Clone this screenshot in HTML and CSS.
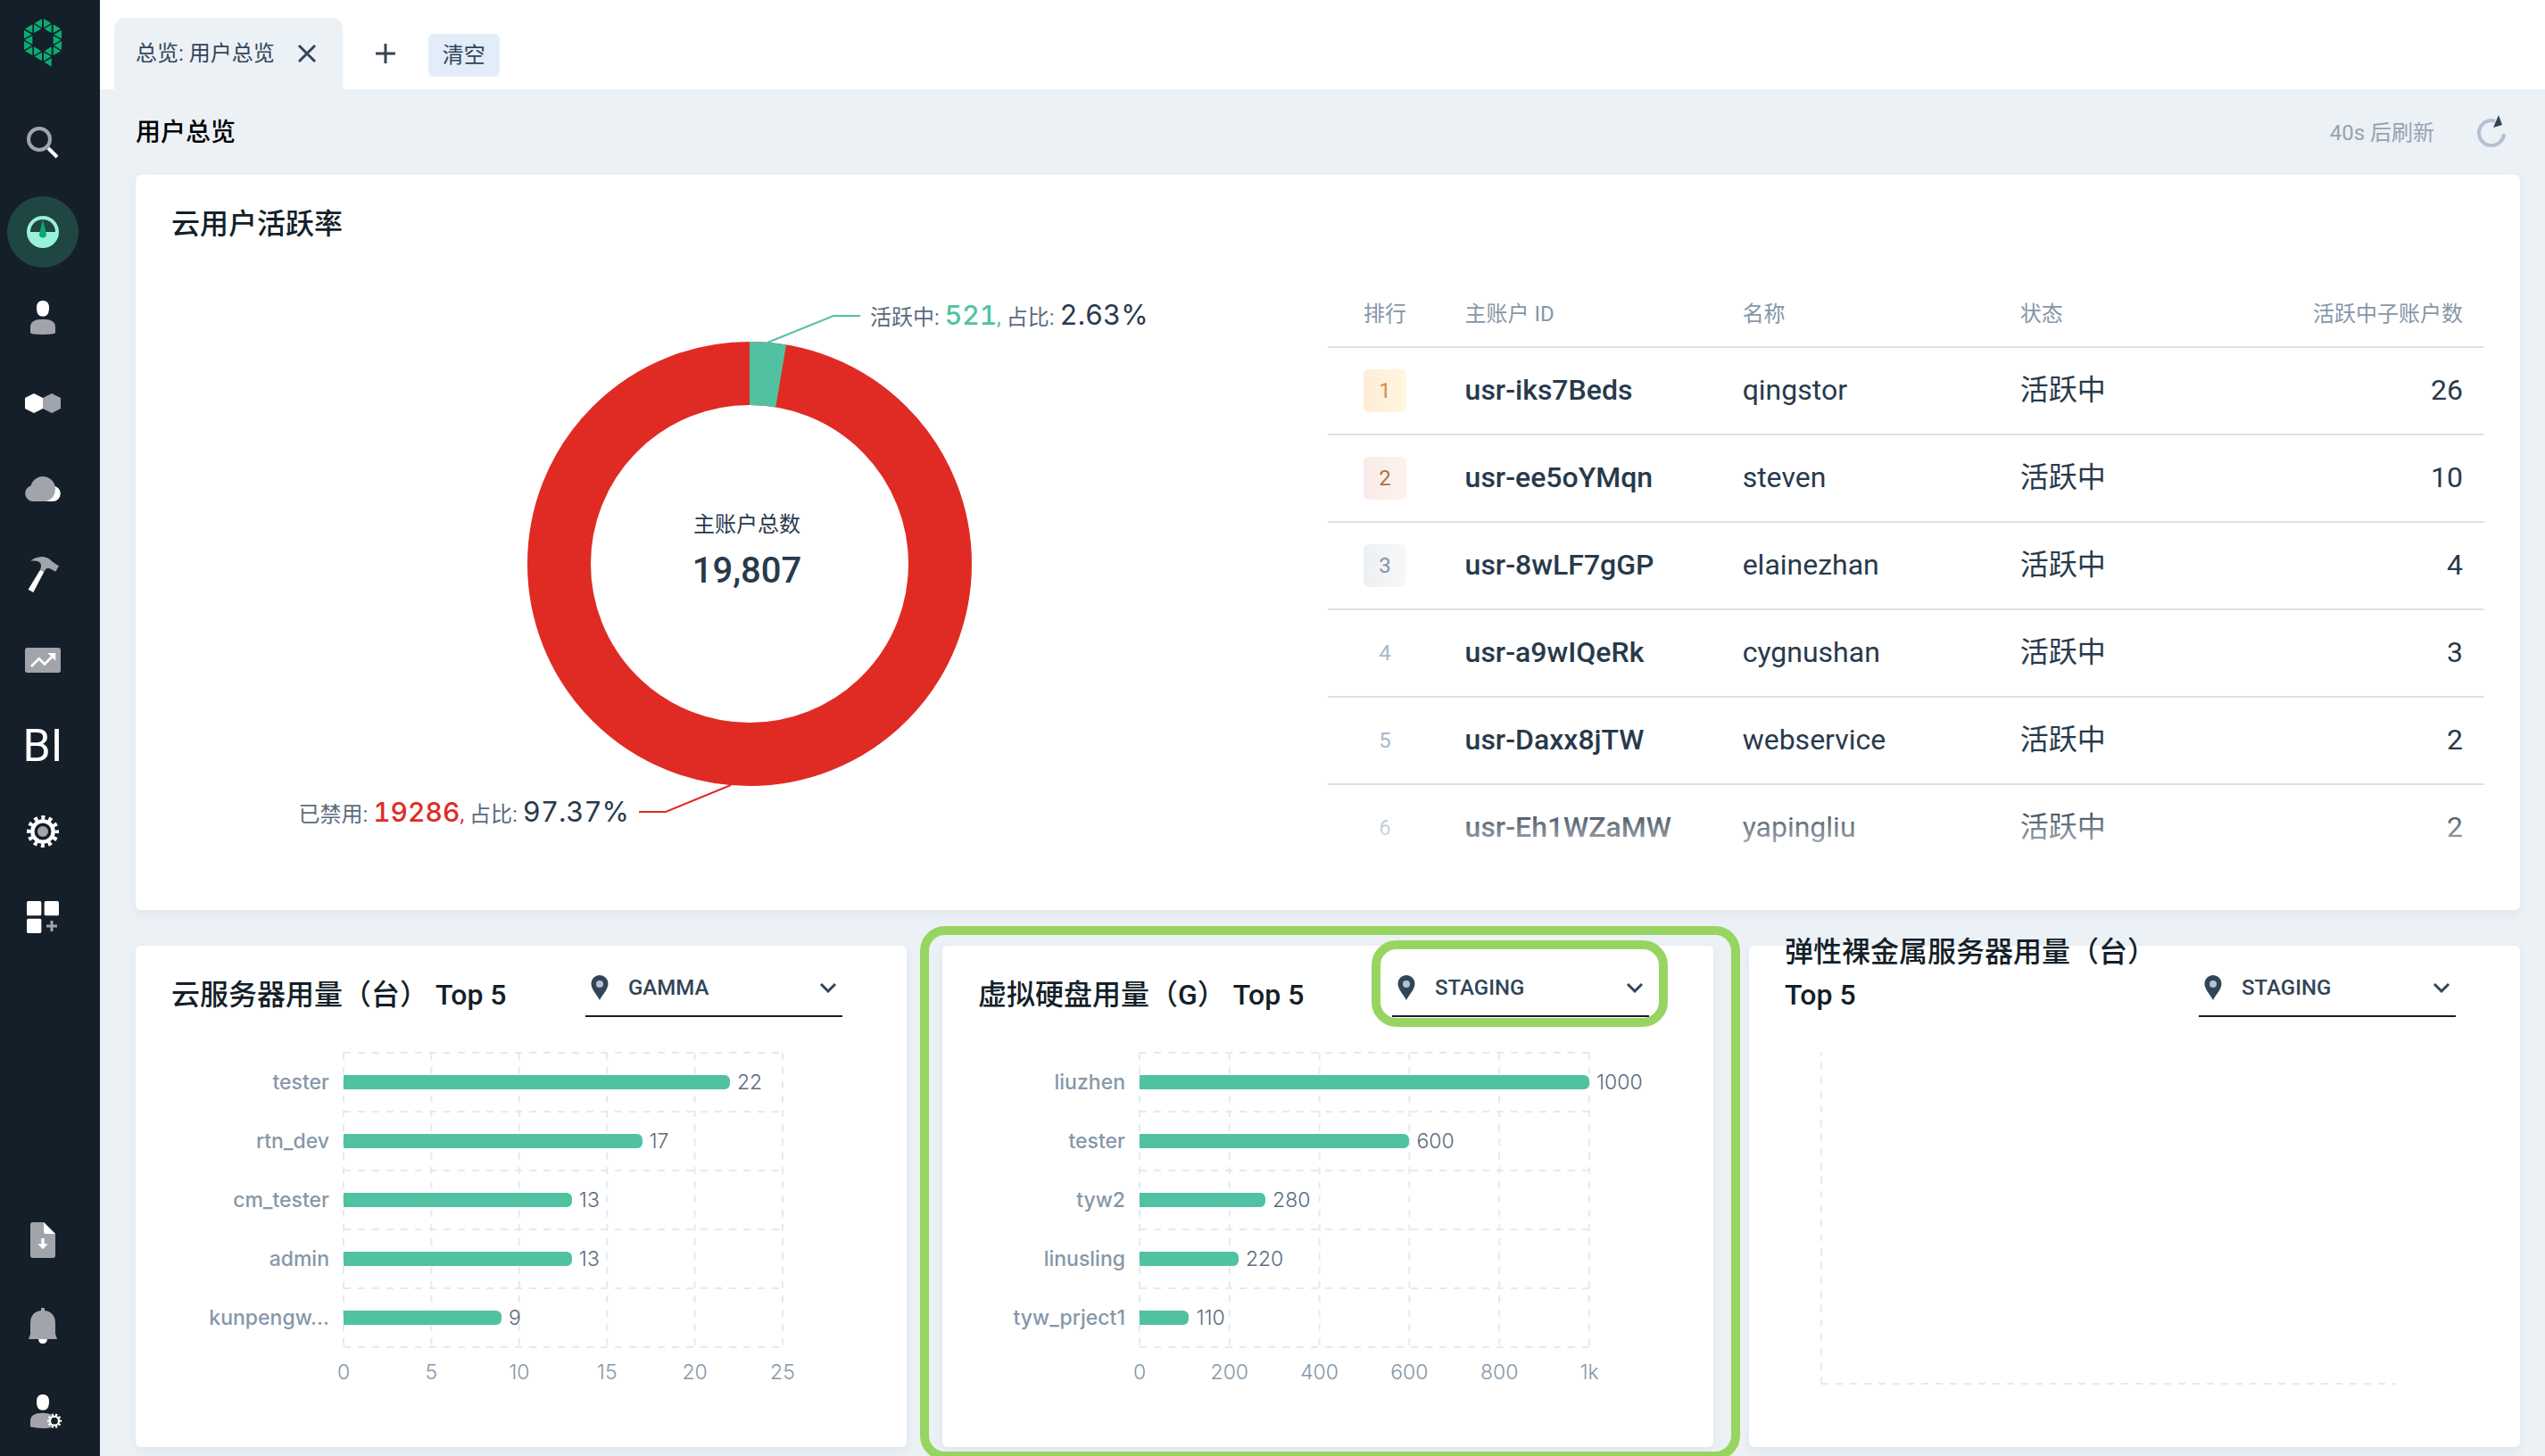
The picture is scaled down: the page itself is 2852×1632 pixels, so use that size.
FILE: index.html
```html
<!DOCTYPE html>
<html lang="zh-CN">
<head>
<meta charset="utf-8">
<title>用户总览</title>
<link rel="stylesheet" href="styles.css">
</head>
<body>
<div class="app">
  <nav class="sidebar">
    <a class="logo" href="#">
      <svg viewBox="0 0 288 288" fill="#0aac72">
        <path d="M141 63V93L116 78zM147 63V93L172 78zM109 82V111L84 97zM114 82V111L139 97zM173 82V111L149 97zM179 82V111L204 97zM81 101V130L107 116zM207 101V130L181 116zM109 120V149L83 134zM179 120V149L205 134zM81 138V168L107 153zM207 138V168L181 153zM109 157V186L84 172zM114 157V186L139 172zM173 157V186L149 172zM179 157V186L204 172zM141 176V205L116 190zM147 176V205L172 190zM173 195V224L149 209z"/>
      </svg>
    </a>
    <a class="nav-item" href="#">
      <svg viewBox="0 0 48 48"><circle cx="20" cy="16" r="12" fill="none" stroke="#a1a5ab" stroke-width="4"/><path d="M30 26L40 36" stroke="#fff" stroke-width="4"/></svg>
    </a>
    <a class="nav-item active" href="#">
      <span class="nav-disc"><svg viewBox="0 0 48 48"><circle cx="24" cy="24" r="18" fill="#9af1da"/><path d="M10 24A14 14 0 0 1 38 24z" fill="#1f4642"/><path d="M24 10L28 26.500A4 4 0 0 1 20 26.500z" fill="#0aa974"/></svg></span>
    </a>
    <a class="nav-item" href="#">
      <svg viewBox="72 714 144 144"><path d="M123 752C123 736 132 729 144 729S165 736 165 752C165 774 157 782 144 782S123 774 123 752z" fill="#fff"/><path d="M102 838V818Q102 791 144 791T186 818V838Q180 843 144 843T102 838z" fill="#a1a5ab"/></svg>
    </a>
    <a class="nav-item" href="#">
      <svg viewBox="0 0 48 48"><path d="M14 13L24 18V30L14 35L4 30V18z" fill="#fff"/><path d="M34 13L44 18V30L34 35L24 30V18z" fill="#a1a5ab"/></svg>
    </a>
    <a class="nav-item" href="#">
      <svg viewBox="0 0 48 48"><path d="M26 20.500H35A8.750 8.750 0 0 1 35 38H26z" fill="#fff"/><path d="M13 38A9 9 0 0 1 10.500 20.400A14 14 0 0 1 38 24Q38 34 28 38z" fill="#a1a5ab"/></svg>
    </a>
    <a class="nav-item" href="#">
      <svg viewBox="72 180 144 144"><path d="M135 236L148 243L112 312L95 302z" fill="#fff"/><path d="M103 206Q118 193 142 192Q162 193 174 207Q180 213 198 223L187 242Q174 235 165 231Q157 230 154 234L148 243L135 236Q141 222 135 213Q128 204 103 206z" fill="#a1a5ab"/></svg>
    </a>
    <a class="nav-item" href="#">
      <svg viewBox="72 468 144 144"><rect x="84" y="498" width="120" height="84" rx="8" fill="#a1a5ab"/><path d="M105 561L131 535L150 553L178 525" fill="none" stroke="#fff" stroke-width="8"/><path d="M160 516H187V542z" fill="#fff"/></svg>
    </a>
    <a class="nav-item nav-bi" href="#">BI</a>
    <a class="nav-item" href="#">
      <svg viewBox="-72 -72 144 144"><circle r="35" fill="none" stroke="#fff" stroke-width="13"/><circle r="47" fill="none" stroke="#fff" stroke-width="14" pathLength="120" stroke-dasharray="5 5" stroke-dashoffset="2.500"/><circle r="18" fill="#a1a5ab"/></svg>
    </a>
    <a class="nav-item" href="#">
      <svg viewBox="72 1332 144 144"><g fill="#fff"><rect x="90" y="1350" width="49" height="49" rx="5"/><rect x="149" y="1350" width="49" height="49" rx="5"/><rect x="90" y="1409" width="49" height="49" rx="5"/></g><path d="M156 1434H192M174 1416V1452" stroke="#a1a5ab" stroke-width="9"/></svg>
    </a>
    <div class="nav-foot">
      <a class="nav-item" href="#">
        <svg viewBox="72 138 144 144"><path d="M110 150H147L186 189V262Q186 270 178 270H110Q102 270 102 262V158Q102 150 110 150z" fill="#a1a5ab"/><path d="M147 150L186 189H157Q147 189 147 179z" fill="#fff"/><path d="M139 204H149V223H161L144 241L127 223H139z" fill="#fff"/></svg>
      </a>
      <a class="nav-item" href="#">
        <svg viewBox="72 426 144 144"><path d="M129 540H159Q159 558 144 558T129 540z" fill="#fff"/><path d="M138 438H150V447Q186 452 186 490V525L192 543H96L102 525V490Q102 452 138 447z" fill="#a1a5ab"/></svg>
      </a>
      <a class="nav-item" href="#">
        <svg viewBox="72 714 144 144"><path d="M123 752C123 736 132 729 144 729S165 736 165 752C165 774 157 782 144 782S123 774 123 752z" fill="#fff"/><path d="M102 838V818Q102 791 144 791Q160 791 170 796L183 818L170 841Q160 843 144 843T102 838z" fill="#a1a5ab"/><circle cx="183" cy="818" r="15" fill="#141f29" stroke="#fff" stroke-width="7"/><circle cx="183" cy="818" r="21" fill="none" stroke="#fff" stroke-width="7" pathLength="100" stroke-dasharray="5 5" stroke-dashoffset="2.500"/></svg>
      </a>
    </div>
  </nav>

  <div class="main">
    <header class="tabs">
      <div class="tab">
        <span>总览: 用户总览</span>
        <button class="icon-button" type="button" aria-label="关闭"><svg viewBox="0 0 24 24"><path d="M3 3L21 21M21 3L3 21"/></svg></button>
      </div>
      <button class="icon-button tab-add" type="button" aria-label="新建"><svg viewBox="0 0 24 24"><path d="M12 1V23M1 12H23"/></svg></button>
      <button class="clear-button" type="button">清空</button>
    </header>

    <div class="page-head">
      <h1>用户总览</h1>
      <span class="countdown">40s 后刷新</span>
      <button class="refresh" type="button" aria-label="刷新"><svg viewBox="0 0 40 40"><path d="M34 21A14 14 0 1 1 24 6.600" fill="none" stroke="#b3c1d3" stroke-width="4"/><path d="M28 0L32 11L22 14z" fill="#324558"/></svg></button>
    </div>

    <main class="content">
      <section class="card overview">
        <h2>云用户活跃率</h2>
        <div class="overview-body">
          <svg class="donut" viewBox="192 316 1296 664">
            <circle cx="840" cy="632" r="213.500" fill="none" stroke="#e02b24" stroke-width="71"/>
            <path d="M840 383A249 249 0 0 1 881 386.400L869.300 456.400A178 178 0 0 0 840 454z" fill="#50c2a2"/>
            <path d="M860 384L934 354H964" fill="none" stroke="#50c2a2" stroke-width="2"/>
            <path d="M819 880L746 910H716" fill="none" stroke="#e02b24" stroke-width="2"/>
            <text class="leader" x="975" y="364">活跃中: <tspan class="count active-count">521</tspan><tspan class="active-count">,</tspan> 占比: <tspan class="share">2.63%</tspan></text>
            <text class="leader" x="705" y="921" text-anchor="end">已禁用: <tspan class="count banned-count">19286</tspan><tspan class="banned-count">,</tspan> 占比: <tspan class="share">97.37%</tspan></text>
            <text class="total-label" x="837" y="596" text-anchor="middle">主账户总数</text>
            <text class="total" x="837" y="653" text-anchor="middle">19,807</text>
          </svg>
          <div class="rank-wrap">
            <table class="rank-table">
              <thead><tr><th class="c-rank">排行</th><th class="c-col">主账户 ID</th><th class="c-col">名称</th><th class="c-col">状态</th><th class="c-num">活跃中子账户数</th></tr></thead>
              <tbody>
                <tr><td class="c-rank"><span class="badge gold">1</span></td><td class="c-id">usr-iks7Beds</td><td>qingstor</td><td>活跃中</td><td class="c-num">26</td></tr>
                <tr><td class="c-rank"><span class="badge bronze">2</span></td><td class="c-id">usr-ee5oYMqn</td><td>steven</td><td>活跃中</td><td class="c-num">10</td></tr>
                <tr><td class="c-rank"><span class="badge silver">3</span></td><td class="c-id">usr-8wLF7gGP</td><td>elainezhan</td><td>活跃中</td><td class="c-num">4</td></tr>
                <tr><td class="c-rank"><span class="badge">4</span></td><td class="c-id">usr-a9wIQeRk</td><td>cygnushan</td><td>活跃中</td><td class="c-num">3</td></tr>
                <tr><td class="c-rank"><span class="badge">5</span></td><td class="c-id">usr-Daxx8jTW</td><td>webservice</td><td>活跃中</td><td class="c-num">2</td></tr>
                <tr><td class="c-rank"><span class="badge">6</span></td><td class="c-id">usr-Eh1WZaMW</td><td>yapingliu</td><td>活跃中</td><td class="c-num">2</td></tr>
              </tbody>
            </table>
          </div>
        </div>
      </section>

      <div class="usage">
        <section class="card usage-card">
          <div class="usage-head">
            <h2>云服务器用量（台） Top 5</h2>
            <label class="zone">
              <svg class="pin" viewBox="0 0 20 28"><path d="M10 0A9.500 9.500 0 0 1 19.500 9.500C19.500 16 13 22 10 28C7 22 .5 16 .5 9.500A9.500 9.500 0 0 1 10 0z" fill="#324558"/><circle cx="10" cy="10" r="4" fill="#b3c1d3"/></svg>
              <select aria-label="区域"><option>GAMMA</option><option>STAGING</option></select>
              <svg class="chevron" viewBox="0 0 20 12"><path d="M2 2L10 10L18 2"/></svg>
            </label>
          </div>
          <div class="chart servers">
            <ul class="names"><li>tester</li><li>rtn_dev</li><li>cm_tester</li><li>admin</li><li>kunpengw…</li></ul>
            <div class="plot">
              <svg class="grid"><line x1="0" x2="0" y1="0" y2="100%"/><line x1="20%" x2="20%" y1="0" y2="100%"/><line x1="40%" x2="40%" y1="0" y2="100%"/><line x1="60%" x2="60%" y1="0" y2="100%"/><line x1="80%" x2="80%" y1="0" y2="100%"/><line x1="100%" x2="100%" y1="0" y2="100%"/><line x1="0" x2="100%" y1="0" y2="0"/><line x1="0" x2="100%" y1="20%" y2="20%"/><line x1="0" x2="100%" y1="40%" y2="40%"/><line x1="0" x2="100%" y1="60%" y2="60%"/><line x1="0" x2="100%" y1="80%" y2="80%"/><line x1="0" x2="100%" y1="100%" y2="100%"/></svg>
              <div class="row"><i class="bar" style="width:88%"></i><span>22</span></div>
              <div class="row"><i class="bar" style="width:68%"></i><span>17</span></div>
              <div class="row"><i class="bar" style="width:52%"></i><span>13</span></div>
              <div class="row"><i class="bar" style="width:52%"></i><span>13</span></div>
              <div class="row"><i class="bar" style="width:36%"></i><span>9</span></div>
            </div>
            <div class="axis"><span>0</span><span>5</span><span>10</span><span>15</span><span>20</span><span>25</span></div>
          </div>
        </section>

        <section class="card usage-card marked">
          <div class="usage-head">
            <h2>虚拟硬盘用量（G） Top 5</h2>
            <label class="zone marked-zone">
              <svg class="pin" viewBox="0 0 20 28"><path d="M10 0A9.500 9.500 0 0 1 19.500 9.500C19.500 16 13 22 10 28C7 22 .5 16 .5 9.500A9.500 9.500 0 0 1 10 0z" fill="#324558"/><circle cx="10" cy="10" r="4" fill="#b3c1d3"/></svg>
              <select aria-label="区域"><option>STAGING</option><option>GAMMA</option></select>
              <svg class="chevron" viewBox="0 0 20 12"><path d="M2 2L10 10L18 2"/></svg>
            </label>
          </div>
          <div class="chart disks">
            <ul class="names"><li>liuzhen</li><li>tester</li><li>tyw2</li><li>linusling</li><li>tyw_prject1</li></ul>
            <div class="plot">
              <svg class="grid"><line x1="0" x2="0" y1="0" y2="100%"/><line x1="20%" x2="20%" y1="0" y2="100%"/><line x1="40%" x2="40%" y1="0" y2="100%"/><line x1="60%" x2="60%" y1="0" y2="100%"/><line x1="80%" x2="80%" y1="0" y2="100%"/><line x1="100%" x2="100%" y1="0" y2="100%"/><line x1="0" x2="100%" y1="0" y2="0"/><line x1="0" x2="100%" y1="20%" y2="20%"/><line x1="0" x2="100%" y1="40%" y2="40%"/><line x1="0" x2="100%" y1="60%" y2="60%"/><line x1="0" x2="100%" y1="80%" y2="80%"/><line x1="0" x2="100%" y1="100%" y2="100%"/></svg>
              <div class="row"><i class="bar" style="width:100%"></i><span>1000</span></div>
              <div class="row"><i class="bar" style="width:60%"></i><span>600</span></div>
              <div class="row"><i class="bar" style="width:28%"></i><span>280</span></div>
              <div class="row"><i class="bar" style="width:22%"></i><span>220</span></div>
              <div class="row"><i class="bar" style="width:11%"></i><span>110</span></div>
            </div>
            <div class="axis"><span>0</span><span>200</span><span>400</span><span>600</span><span>800</span><span>1k</span></div>
          </div>
        </section>

        <section class="card usage-card">
          <div class="usage-head">
            <h2>弹性裸金属服务器用量（台） Top 5</h2>
            <label class="zone">
              <svg class="pin" viewBox="0 0 20 28"><path d="M10 0A9.500 9.500 0 0 1 19.500 9.500C19.500 16 13 22 10 28C7 22 .5 16 .5 9.500A9.500 9.500 0 0 1 10 0z" fill="#324558"/><circle cx="10" cy="10" r="4" fill="#b3c1d3"/></svg>
              <select aria-label="区域"><option>STAGING</option><option>GAMMA</option></select>
              <svg class="chevron" viewBox="0 0 20 12"><path d="M2 2L10 10L18 2"/></svg>
            </label>
          </div>
          <div class="chart empty">
            <svg class="grid"><line x1="0" x2="0" y1="100%" y2="0"/><line x1="0" x2="100%" y1="100%" y2="100%"/></svg>
          </div>
        </section>
      </div>
    </main>
  </div>
</div>
</body>
</html>
```
FILE: styles.css
```css
* { box-sizing: border-box; }

body {
  margin: 0;
  background: #ecf1f6;
  color: #324558;
  font: 24px/32px Roboto, "Noto Sans CJK SC", sans-serif;
}

h1, h2, ul { margin: 0; padding: 0; font-weight: 500; }
ul { list-style: none; }
button, select { margin: 0; padding: 0; border: 0; background: none; color: inherit; font: inherit; }
svg { display: block; }

.app { display: flex; min-height: 100vh; overflow: hidden; }

/* Sidebar */
.sidebar {
  display: flex;
  flex-direction: column;
  flex: none;
  width: 112px;
  padding: 0 16px 2px 0;
  background: #141f29;
}
.logo { height: 96px; margin-bottom: 20px; }
.logo svg { width: 96px; height: 96px; }
.nav-item {
  display: flex;
  align-items: center;
  justify-content: center;
  width: 96px;
  height: 96px;
  color: #fff;
  text-decoration: none;
}
.nav-item svg { width: 48px; height: 48px; }
.nav-disc {
  display: flex;
  align-items: center;
  justify-content: center;
  width: 80px;
  height: 80px;
  border-radius: 50%;
  background: #1f4642;
}
.nav-bi { font-size: 50px; }
.nav-foot { margin-top: auto; }

/* Tabs */
.main { flex: 1; min-width: 0; }
.tabs {
  display: flex;
  align-items: flex-end;
  height: 100px;
  padding-left: 16px;
  background: #fff;
}
.tab {
  display: flex;
  align-items: center;
  gap: 24px;
  height: 80px;
  padding: 0 28px 0 24px;
  border-radius: 12px 12px 0 0;
  background: #ecf1f6;
}
.icon-button svg { width: 24px; height: 24px; fill: none; stroke: #324558; stroke-width: 3; }
.tab-add { margin: 0 36px 28px; }
.clear-button {
  width: 80px;
  height: 48px;
  margin-bottom: 14px;
  border-radius: 6px;
  background: #e3edf9;
}

/* Page heading */
.page-head {
  display: flex;
  align-items: center;
  height: 96px;
  padding: 2px 40px 0;
}
.page-head h1 { flex: 1; color: #000; font-size: 28px; }
.countdown { margin-right: 44px; color: #95a3b3; }
.refresh svg { width: 40px; height: 40px; }

/* Cards */
.content { display: grid; gap: 40px; padding: 0 28px 10px 40px; }
.card {
  border-radius: 6px;
  background: #fff;
  box-shadow: 0 4px 12px rgba(50, 69, 88, 0.07);
}
.card h2 { color: #141f29; font-size: 32px; line-height: 48px; }

.overview { padding: 31px 40px 40px; }
.overview-body { display: grid; grid-template-columns: 1fr 1fr; margin-top: 41px; }
.donut { width: 100%; height: 664px; }
.leader { fill: #5b6b7e; font-size: 24px; }
.count, .share { font: 30px Inter, sans-serif; font-variant-numeric: tabular-nums; }
.count { font-weight: 500; }
.share { fill: #283a4b; font-size: 31px; }
.active-count { fill: #50c2a2; }
.banned-count { fill: #e02b24; }
.total-label { fill: #283a4b; font-size: 24px; }
.total { fill: #283a4b; font-size: 40px; font-weight: 500; }

/* Ranking table */
.rank-wrap { position: relative; height: 664px; overflow: hidden; }
.rank-wrap::after {
  content: "";
  position: absolute;
  inset: auto 0 0;
  height: 80px;
  background: linear-gradient(rgba(255, 255, 255, 0), #fff);
}
.rank-table { width: 100%; border-collapse: separate; border-spacing: 0; table-layout: fixed; }
.rank-table th, .rank-table td { padding: 0 0 0 24px; border-bottom: 2px solid #d9e2ed; text-align: left; }
.rank-table th { height: 74px; color: #8697a9; font-weight: 400; }
.rank-table td { height: 98px; padding-bottom: 2px; color: #283a4b; font-size: 32px; }
.rank-table tr:last-child td { border-bottom-color: transparent; }
.rank-table .c-rank { width: 10%; padding-bottom: 0; padding-left: 40px; }
.rank-table .c-col { width: 24%; }
.rank-table .c-id { font-weight: 500; }
.rank-table .c-num { padding-right: 24px; padding-left: 0; text-align: right; }
.badge {
  display: block;
  width: 48px;
  height: 48px;
  border-radius: 6px;
  color: #a6b9cc;
  font-size: 24px;
  line-height: 48px;
  text-align: center;
}
.gold { background: linear-gradient(90deg, #ffecd8, #fff7df); color: #cf8c50; }
.bronze { background: linear-gradient(90deg, #faece9, #fcf2eb); color: #a8714f; }
.silver { background: linear-gradient(90deg, #edf0f2, #f7f8f9); color: #8093ab; }

/* Usage cards */
.usage { display: grid; grid-template-columns: repeat(3, 1fr); gap: 40px; }
.usage-card { height: 562px; }
.usage-head { display: flex; align-items: flex-end; height: 80px; padding: 0 72px 0 40px; }
.usage-head h2 { flex: 1; padding-bottom: 1px; white-space: pre-wrap; }
.zone {
  display: flex;
  align-items: center;
  width: 288px;
  height: 64px;
  padding: 0 6px;
  border-bottom: 2px solid #141f29;
}
.pin { width: 20px; height: 28px; margin-right: 22px; }
.zone select { flex: 1; height: 48px; appearance: none; font-weight: 500; outline: 0; }
.chevron { width: 20px; height: 12px; fill: none; stroke: #324558; stroke-width: 3; }

/* Highlight frames */
.marked, .marked-zone { position: relative; }
.marked::after, .marked-zone::after {
  content: "";
  position: absolute;
  border: 10px solid #97d560;
  border-radius: 28px;
  pointer-events: none;
}
.marked::after { inset: -22px -30px -15px -25px; }
.marked-zone::after { inset: -22px -21px -13px -23px; }

/* Bar charts */
.chart {
  display: grid;
  margin: 40px 139px 0 40px;
  color: #8697a9;
  font: 300 23px/32px Inter, sans-serif;
}
.servers { grid-template-columns: 193px 1fr; }
.disks { grid-template-columns: 181px 1fr; }
.names li { height: 66px; padding-right: 16px; line-height: 66px; text-align: right; }
.plot { position: relative; }
.grid { overflow: visible; width: 100%; height: 100%; stroke: #e3eaf3; stroke-width: 2; stroke-dasharray: 8 8; }
.plot .grid { position: absolute; inset: 0; }
.row { position: relative; display: flex; align-items: center; gap: 8px; height: 66px; color: #5b6b7e; }
.bar { flex: none; height: 16px; border-radius: 0 6px 6px 0; background: #50c2a2; }
.axis { display: flex; grid-column: 2; justify-content: space-between; margin-top: 12px; }
.axis span { display: flex; justify-content: center; width: 0; }
.empty { height: 372px; margin-top: 39px; margin-left: 81px; }
```
